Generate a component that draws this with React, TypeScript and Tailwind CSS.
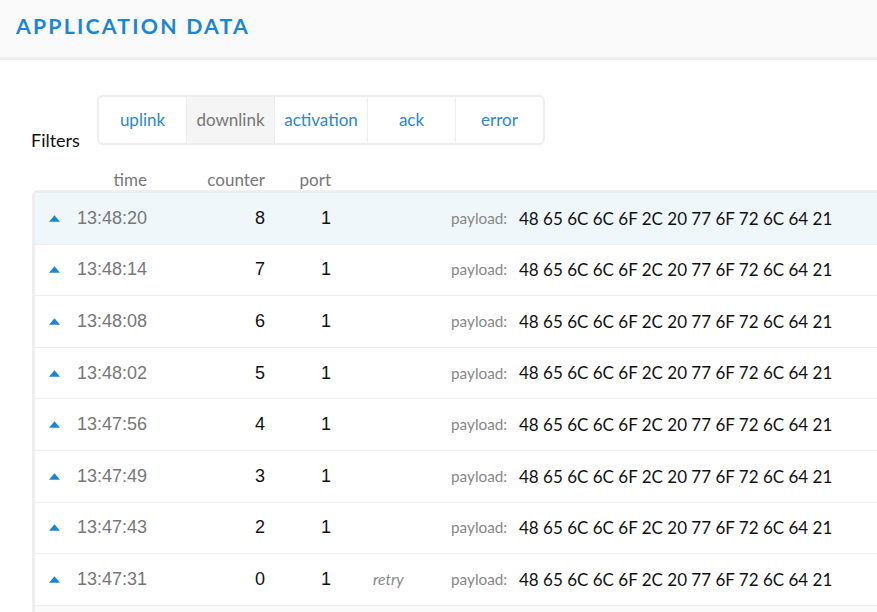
import React from "react";

const rows = [
  { time: "13:48:20", counter: 8, port: 1, hover: true },
  { time: "13:48:14", counter: 7, port: 1 },
  { time: "13:48:08", counter: 6, port: 1 },
  { time: "13:48:02", counter: 5, port: 1 },
  { time: "13:47:56", counter: 4, port: 1 },
  { time: "13:47:49", counter: 3, port: 1 },
  { time: "13:47:43", counter: 2, port: 1 },
  { time: "13:47:31", counter: 0, port: 1, retry: true },
];

const filters = [
  { label: "uplink", w: "w-[87px]" },
  { label: "downlink", w: "w-[88px]", active: true },
  { label: "activation", w: "w-[93px]" },
  { label: "ack", w: "w-[88px]" },
  { label: "error", w: "w-[88px]" },
];

const lato = "font-['Lato','Open_Sans',sans-serif]";
const arial = "font-['Liberation_Sans',Arial,sans-serif]";

const App: React.FC = () => {
  return (
    <div className={`w-[877px] h-[612px] overflow-hidden bg-white ${lato}`}>
      <div className="h-[60px] bg-[#fafafa] border-b-[3px] border-[#eeeeee] flex items-center pl-4 pb-[3px]">
        <h1 className="text-[21.3px] font-bold tracking-[2.2px] text-[#1a86d6]">
          APPLICATION DATA
        </h1>
      </div>

      <div className="mt-[35px] flex items-start h-[50px]">
        <div className="w-[97px] h-[50px] pl-[31px] pt-[36px] text-[18px] leading-[18px] text-[#111]">
          Filters
        </div>
        <div className="flex border-2 border-[#eeeeee] rounded-[6px] overflow-hidden h-[50px]">
          {filters.map((f, i) => (
            <div
              key={f.label}
              className={`${f.w} flex items-center justify-center text-[17px] ${
                i > 0 ? "border-l border-[#eeeeee]" : ""
              } ${f.active ? "bg-[#f5f5f5] text-[#777]" : "text-[#2d86d2]"}`}
            >
              {f.label}
            </div>
          ))}
        </div>
      </div>

      <div className="mt-[25px] flex pl-[50px] text-[17px] text-[#777] h-[20px] items-center">
        <div className="w-[10px]" />
        <div className="w-[87px] text-right">time</div>
        <div className="w-[118px] text-right">counter</div>
        <div className="w-[66px] text-right">port</div>
      </div>

      <div className="ml-[32px] border-l-[3px] border-t-[3px] border-[#eeeeee] rounded-tl-[6px]">
        {rows.map((r) => (
          <div
            key={r.time}
            className={`h-[51.6px] border-b border-[#eeeeee] flex items-center pl-[14px] ${
              r.hover ? "bg-[#f0f7fb]" : "bg-white"
            }`}
          >
            <div className="w-[11px] flex items-center">
              <svg width="12" height="7" viewBox="0 0 12 7">
                <path d="M0 7 L6 0 L12 7 Z" fill="#1a86d6" />
              </svg>
            </div>
            <div className={`w-[87px] text-right text-[18px] text-[#777] ${arial}`}>{r.time}</div>
            <div className={`w-[118px] text-right text-[18px] text-[#111] ${arial}`}>{r.counter}</div>
            <div className={`w-[66px] text-right text-[18px] text-[#111] ${arial}`}>{r.port}</div>
            <div className="ml-[42px] w-[78px] text-[15.5px] italic text-[#888]">
              {r.retry ? "retry" : ""}
            </div>
            <div className="w-[68px] text-[15.3px] text-[#888]">payload:</div>
            <div className="text-[17px] text-[#111] whitespace-nowrap">
              48 65 6C 6C 6F 2C 20 77 6F 72 6C 64 21
            </div>
          </div>
        ))}
        <div className="h-[20px] bg-[#fafafa]" />
      </div>
    </div>
  );
};

export default App;
